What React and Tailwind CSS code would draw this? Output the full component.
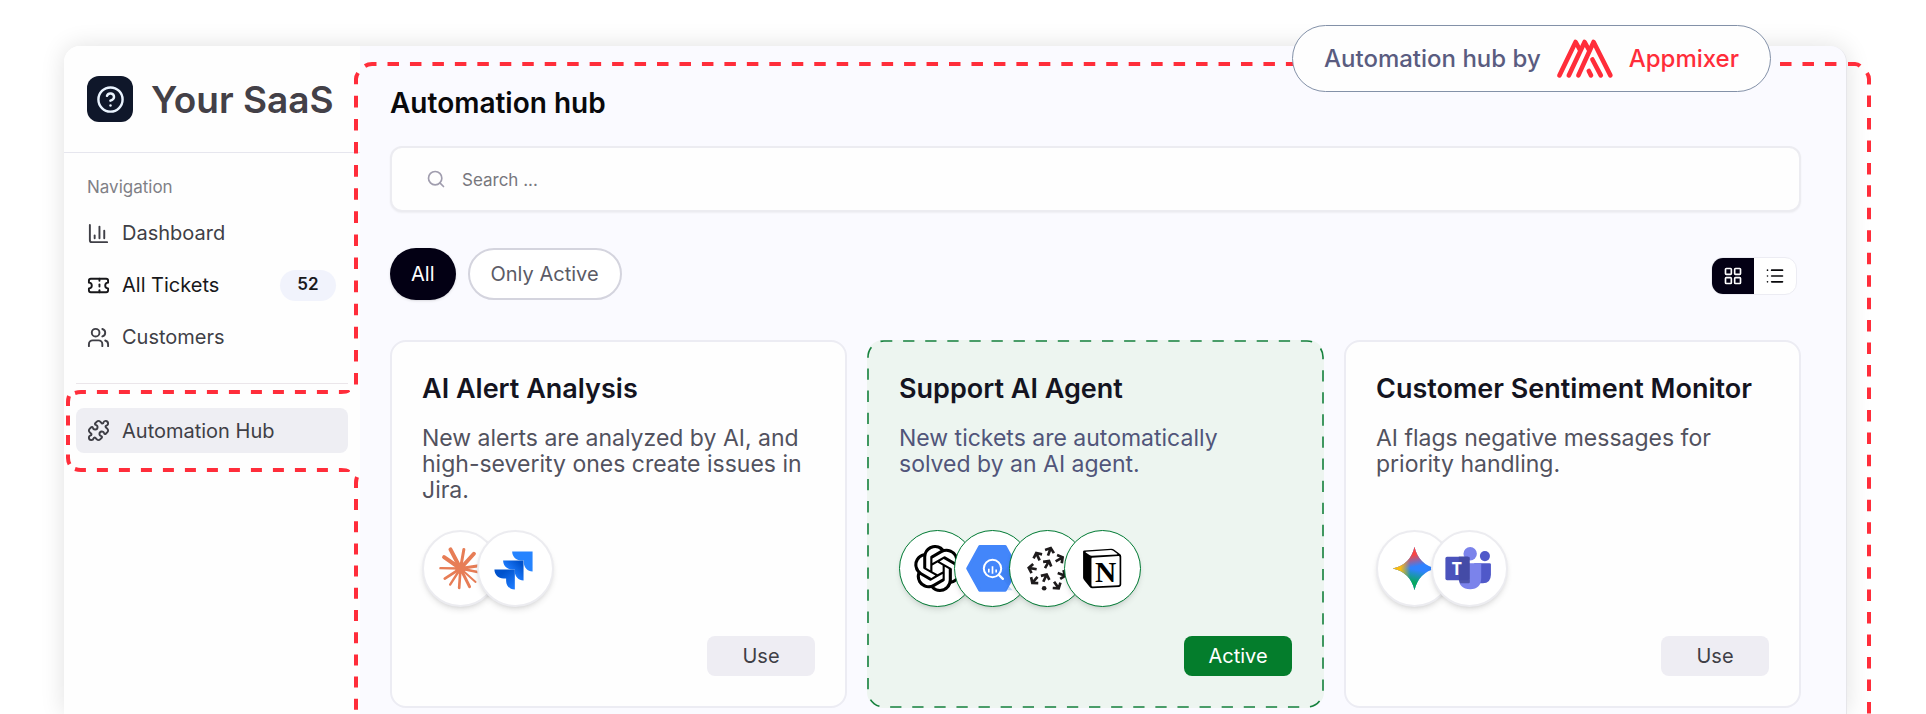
import { ChartColumn, CircleHelp, LayoutGrid, List, Puzzle, Search, Ticket, Users } from 'lucide-react';
import { SiOpenai } from 'react-icons/si';

const navItems = [
    { label: 'Dashboard', icon: ChartColumn },
    { label: 'All Tickets', icon: Ticket, badge: 52, current: true },
    { label: 'Customers', icon: Users },
];

const automations = [
    {
        title: 'AI Alert Analysis',
        description: 'New alerts are analyzed by AI, and high-severity ones create issues in Jira.',
        logos: [ClaudeLogo, JiraLogo],
    },
    {
        title: 'Support AI Agent',
        description: 'New tickets are automatically solved by an AI agent.',
        logos: [OpenAiLogo, BigQueryLogo, ArrowsLogo, NotionLogo],
        active: true,
    },
    {
        title: 'Customer Sentiment Monitor',
        description: 'AI flags negative messages for priority handling.',
        logos: [GeminiLogo, TeamsLogo],
    },
];

/* Every service logo shares one centred canvas */
function LogoCanvas({ children }) {
    return (
        <svg viewBox="-115 -115 230 230" className="h-[77px] w-[77px] shrink-0" aria-hidden="true">
            {children}
        </svg>
    );
}

function ClaudeLogo() {
    const rays = [
        [-30, -57, 12], [10, -57, 9], [40, -44, 12], [60, -9, 9], [58, 12, 7], [45, 40, 6],
        [27, 54, 9], [-4, 58, 8], [-31, 48, 7], [-47, 30, 8], [-60, -1, 7], [-49, -34, 12],
    ];
    return (
        <LogoCanvas>
            <g stroke="#e77d56" strokeLinecap="round">
                {rays.map(([x, y, w]) => (
                    <line key={`${x},${y}`} x1="0" y1="0" x2={x} y2={y} strokeWidth={w} />
                ))}
            </g>
            <circle r="16" fill="#e77d56" />
        </LogoCanvas>
    );
}

function JiraLogo() {
    const d = 'M0 0h61v60c-15 0-26-12-26-26v-7h-8c-15 0-27-12-27-27z';
    return (
        <LogoCanvas>
            <defs>
                <linearGradient id="jira" x1="0.9" y1="0.1" x2="0.4" y2="0.6">
                    <stop offset="0.1" stopColor="#0052cc" />
                    <stop offset="1" stopColor="#1d7afc" />
                </linearGradient>
                <linearGradient id="jira-low" x1="0" y1="0" x2="0.8" y2="1">
                    <stop offset="0.3" stopColor="#0052cc" />
                    <stop offset="1" stopColor="#1d7afc" />
                </linearGradient>
            </defs>
            <path d={d} transform="translate(-10 -51)" fill="#2684ff" />
            <path d={d} transform="translate(-37 -24)" fill="url(#jira)" />
            <path d={d} transform="translate(-63 3)" fill="url(#jira-low)" />
        </LogoCanvas>
    );
}

function OpenAiLogo() {
    return <SiOpenai className="h-[47px] w-[47px] shrink-0 text-black" aria-hidden="true" />;
}

function BigQueryLogo() {
    return (
        <LogoCanvas>
            <path
                d="M-74 0L-38-66H38L74 0L38 65H-38Z"
                fill="#4386fa"
                stroke="#4386fa"
                strokeWidth="9"
                strokeLinejoin="round"
            />
            <path d="M20 21L60 65H38L74 0L50-10Z" fill="#3b79e6" opacity="0.3" />
            <g fill="none" stroke="#ffffff">
                <circle r="26" strokeWidth="6" />
                <path d="M19 19L31 31" strokeWidth="7" strokeLinecap="round" />
                <path d="M-11 1V12M0-7V16M11 3V12" strokeWidth="5" />
            </g>
        </LogoCanvas>
    );
}

function ArrowsLogo() {
    const arrows = [
        [10, -62, 20], [-34, -47, -25], [-57, -2, -80], [-46, 44, -140], [5, -23, 30],
        [-2, 17, 25], [34, 60, 145], [54, 22, 110], [46, -34, 60],
    ];
    return (
        <LogoCanvas>
            <g fill="none" stroke="#1e1b1c" strokeWidth="8">
                {arrows.map(([x, y, angle]) => (
                    <path key={`${x},${y}`} d="M0 25V1M-14 12L0 1L14 12" transform={`translate(${x} ${y}) rotate(${angle})`} />
                ))}
            </g>
            <circle cx="-10" cy="59" r="7" fill="#1e1b1c" />
        </LogoCanvas>
    );
}

function NotionLogo() {
    return (
        <LogoCanvas>
            <path
                d="M-58-51Q-58-54-54-54L26-59Q31-59 35-56L52-43Q56-40 56-36V48Q56 54 50 55L-30 59Q-35 59-38 55L-55 34Q-58 31-58 27Z"
                fill="#000000"
            />
            <path d="M-49-50L25-55Q29-55 32-53L44-44Q46-42 42-42L-32-38Q-36-38-39-40L-50-48Q-52-50-49-50Z" fill="#ffffff" />
            <path d="M-31-32L48-37Q51-37 51-33V46Q51 50 47 50L-29 54Q-33 54-33 50V-29Q-33-32-31-32Z" fill="#ffffff" />
            <text x="9" y="39" textAnchor="middle" fontFamily="Liberation Serif, serif" fontWeight="700" fontSize="88">
                N
            </text>
        </LogoCanvas>
    );
}

function GeminiLogo() {
    const d = 'M0-65Q12-12 65 0Q12 12 0 65Q-12 12-65 0Q-12-12 0-65Z';
    const tints = [
        { id: 'gemini-green', color: '#08a862', from: [-6, 60], to: [6, 4] },
        { id: 'gemini-red', color: '#f94543', from: [-8, -60], to: [4, -6] },
        { id: 'gemini-yellow', color: '#fabc12', from: [-58, 0], to: [-12, 0] },
    ];
    return (
        <LogoCanvas>
            <path d={d} fill="#2f82ff" />
            {tints.map(({ id, color, from, to }) => (
                <g key={id}>
                    <linearGradient id={id} gradientUnits="userSpaceOnUse" x1={from[0]} y1={from[1]} x2={to[0]} y2={to[1]}>
                        <stop offset="0.35" stopColor={color} />
                        <stop offset="1" stopColor={color} stopOpacity="0" />
                    </linearGradient>
                    <path d={d} fill={`url(#${id})`} />
                </g>
            ))}
        </LogoCanvas>
    );
}

function TeamsLogo() {
    return (
        <LogoCanvas>
            <circle cx="46" cy="-37" r="15" fill="#5059c9" />
            <path d="M14-16H60Q64-16 64-12V18Q64 44 40 44H14Z" fill="#5059c9" />
            <circle cx="2" cy="-44" r="20" fill="#7b83eb" />
            <path d="M-32-16H31Q35-16 35-12V28Q35 62 2 62Q-32 62-32 28Z" fill="#7b83eb" />
            <path d="M-32-35H-3Q1-35 1-31V40Q1 44-3 44H-28Q-32 38-32 28Z" fill="#3d4596" opacity="0.75" />
            <rect x="-72" y="-35" width="71" height="70" rx="5" fill="#4b53bc" />
            <path d="M-32-35H-6Q-1-35-1-30V30Q-1 35-6 35H-32Z" fill="#444ba6" />
            <text x="-38" y="18" textAnchor="middle" fontFamily="Open Sans, sans-serif" fontWeight="700" fontSize="52" fill="#ffffff">
                T
            </text>
        </LogoCanvas>
    );
}

function AppmixerLogo() {
    return (
        <svg viewBox="10 8 58 42" className="h-[42px] w-[58px]" fill="none" stroke="#ff2d3a" strokeWidth="4.6" strokeLinecap="round" strokeLinejoin="round" aria-hidden="true">
            <path d="M13.4 45.4L29.6 12L34 20" />
            <path d="M22.8 45.4L38.6 12L43 20" />
            <path d="M32.4 45.4L47.6 12L64.4 45.4" />
            <path d="M46.4 29.5L54.8 45.4" />
            <path d="M42.8 41L45 45.4" />
        </svg>
    );
}

/* Red dashed frame around the embedded hub; the gap on the left opens into the nav item */
function HubOutline() {
    return (
        <div
            className="pointer-events-none absolute inset-0 fill-none stroke-[#ff2d3a] stroke-4 [&_svg]:overflow-visible"
            aria-hidden="true"
        >
            <svg className="absolute left-[5px] top-4 h-1 w-[calc(100%-5px)]">
                <path d="M0 4Q3 2 7 2H11.5" />
                <line x1="22.5" y1="2" x2="100%" y2="2" strokeDasharray="11.5 10.96" />
                <svg x="100%">
                    <path d="M2 2H9Q12 2 14 4" />
                </svg>
            </svg>
            <svg className="absolute -left-1.5 top-[27px] h-[312px] w-1">
                <path d="M4 0Q2 3 2 6V312" strokeDasharray="11.6 11.5" />
            </svg>
            <svg className="absolute -left-1.5 top-[431px] h-[calc(100%-431px)] w-1">
                <path d="M3 0Q2 3 2 6V11" />
                <line x1="2" y1="22" x2="2" y2="100%" strokeDasharray="11 11.2" />
            </svg>
            <svg className="absolute -right-[25px] top-[27px] h-[calc(100%-27px)] w-1">
                <path d="M0 0Q2 3 2 6V11.5" />
                <line x1="2" y1="22.5" x2="2" y2="100%" strokeDasharray="11.5 10.96" />
            </svg>
        </div>
    );
}

function TabOutline() {
    return (
        <svg
            viewBox="0 0 284 82"
            className="pointer-events-none absolute -left-2.5 -top-[18px] h-[82px] w-[284px]"
            fill="none"
            stroke="#ff2d3a"
            strokeWidth="4"
            aria-hidden="true"
        >
            <path d="M9 3Q12 2 15 2H275Q281 2 283 0" strokeDasharray="11 11" />
            <path d="M3 6Q2 9 2 12V68Q2 72 4 75" strokeDasharray="10 9.5" />
            <path d="M9 79Q12 80 15 80H275Q281 80 283 82" strokeDasharray="11 11" />
        </svg>
    );
}

function Sidebar() {
    return (
        <aside className="w-[296px] shrink-0 rounded-tl-2xl bg-[#fefefe]">
            <div className="flex h-[107px] items-center gap-[18px] border-b border-[#e6e6ee] pl-[23px]">
                <div className="flex h-[46px] w-[46px] items-center justify-center rounded-xl bg-[#0f172a]">
                    <CircleHelp className="h-[29px] w-[29px] text-[#eaf4ff]" />
                </div>
                <span className="whitespace-nowrap text-[37px] font-semibold leading-none text-[#434047]">Your SaaS</span>
            </div>
            <nav className="px-3" aria-label="Main">
                <p className="mb-2 mt-[22px] pl-[11px] text-[17px] leading-6 text-[#808086]">Navigation</p>
                {navItems.map(({ label, icon: Icon, badge, current }) => (
                    <a
                        key={label}
                        href="#"
                        className={`flex h-[52px] items-center gap-3 pl-[11px] pr-3 text-[20px] ${current ? 'text-[#18181b]' : 'text-[#3f3f46]'}`}
                    >
                        <Icon className="h-[23px] w-[23px]" />
                        {label}
                        {badge && (
                            <span className="ml-auto flex h-[31px] w-14 items-center justify-center rounded-full bg-[#f1f3fc] text-[17px] font-semibold text-[#18181b]">
                                {badge}
                            </span>
                        )}
                    </a>
                ))}
                <hr className="mb-6 mt-5 border-[#ebe6ea]" />
                <div className="relative">
                    <a href="#" className="flex h-[45px] items-center gap-3 rounded-lg bg-[#eeeef3] px-[11px] text-[20px] text-[#3f3f46]">
                        <Puzzle className="h-[23px] w-[23px]" />
                        Automation Hub
                    </a>
                    <TabOutline />
                </div>
            </nav>
        </aside>
    );
}

function AutomationCard({ title, description, logos, active }) {
    return (
        <article
            className={`relative flex h-[368px] flex-col rounded-2xl border-2 px-[30px] pb-[30px] pt-[31px] ${
                active ? 'border-transparent bg-[#edf5f0] bg-clip-border' : 'border-[#ececf3] bg-[#fefefe]'
            }`}
        >
            {active && (
                <svg className="pointer-events-none absolute -inset-px h-[calc(100%+2px)] w-[calc(100%+2px)] overflow-visible" aria-hidden="true">
                    <rect width="100%" height="100%" rx="16" fill="none" stroke="#15803d" strokeWidth="1.6" strokeDasharray="11.3 10.8" strokeDashoffset="3" />
                </svg>
            )}
            <h2 className="whitespace-nowrap text-[27px] font-semibold leading-8 text-[#14141f]">{title}</h2>
            <p className={`mt-5 min-h-[78px] text-[23px] leading-[26px] ${active ? 'text-[#51557a]' : 'text-[#52525e]'}`}>
                {description}
            </p>
            <div className="mt-[27px] flex">
                {logos.map((Logo, i) => (
                    <span
                        key={i}
                        className={`flex h-[77px] w-[77px] items-center justify-center overflow-hidden rounded-full bg-white shadow-md not-first:-ml-[22px] ${
                            active ? 'border border-[#007a33]' : 'border-2 border-[#ececf0]'
                        }`}
                    >
                        <Logo />
                    </span>
                ))}
            </div>
            <button
                type="button"
                className={`mt-auto h-10 w-[108px] self-end rounded-lg text-[20px] ${
                    active ? 'bg-[#047d2c] text-white' : 'bg-[#eeedf3] text-[#3f3f46]'
                }`}
            >
                {active ? 'Active' : 'Use'}
            </button>
        </article>
    );
}

export default function App() {
    return (
        <div className="flex min-h-screen overflow-hidden bg-white pl-16 pr-[79px] pt-[46px] font-[Inter,sans-serif]">
            <div className="flex flex-1 rounded-t-2xl shadow-[0_0_24px_rgba(0,0,0,0.12)]">
                <Sidebar />
                <main className="relative min-w-0 flex-1 rounded-tr-2xl border-r border-[#e6e6ea] bg-[#fafaff] pb-1.5 pl-[30px] pr-[45px] pt-[39px]">
                    <h1 className="text-[28px] font-semibold leading-9 text-[#09090b]">Automation hub</h1>

                    <label className="mt-[25px] flex h-[66px] items-center gap-4 rounded-xl border-2 border-[#ececf1] bg-[#fefefe] px-[34px] shadow-xs">
                        <Search className="h-5 w-5 text-[#a09dae]" />
                        <input
                            type="text"
                            aria-label="Search"
                            placeholder="Search ..."
                            className="h-full min-w-0 flex-1 bg-transparent pt-0.5 text-[17px] outline-none placeholder:text-[#77777d]"
                        />
                    </label>

                    <div className="mt-9 flex items-center gap-3">
                        <button type="button" className="h-[52px] rounded-full bg-[#030014] px-[21px] text-[20px] text-white shadow-sm">
                            All
                        </button>
                        <button type="button" className="h-[52px] rounded-full border-2 border-[#d4d4de] bg-white px-[21px] text-[20px] text-[#5b5b66]">
                            Only Active
                        </button>
                        <div className="ml-auto mr-1 mt-1 flex h-[38px] overflow-hidden rounded-xl border border-[#ececf3] bg-white">
                            <button type="button" aria-label="Grid view" className="flex w-[42px] items-center justify-center bg-[#030014] text-white">
                                <LayoutGrid className="h-5 w-5" />
                            </button>
                            <button type="button" aria-label="List view" className="flex w-[42px] items-center justify-center text-[#09090b]">
                                <List className="h-5 w-5" />
                            </button>
                        </div>
                    </div>

                    <div className="mt-10 grid grid-cols-3 gap-5">
                        {automations.map((automation) => (
                            <AutomationCard key={automation.title} {...automation} />
                        ))}
                    </div>

                    <HubOutline />

                    {/* Attribution pill over the frame */}
                    <div className="absolute -top-[21px] right-[75px] flex h-[67px] w-[479px] items-center justify-center gap-[15px] whitespace-nowrap rounded-full border border-[#8391a8] bg-[#fefefe] text-[24px] font-medium">
                        <span className="text-[#5a5c80]">Automation hub by</span>
                        <AppmixerLogo />
                        <span className="text-[#ff2d3a]">Appmixer</span>
                    </div>
                </main>
            </div>
        </div>
    );
}
